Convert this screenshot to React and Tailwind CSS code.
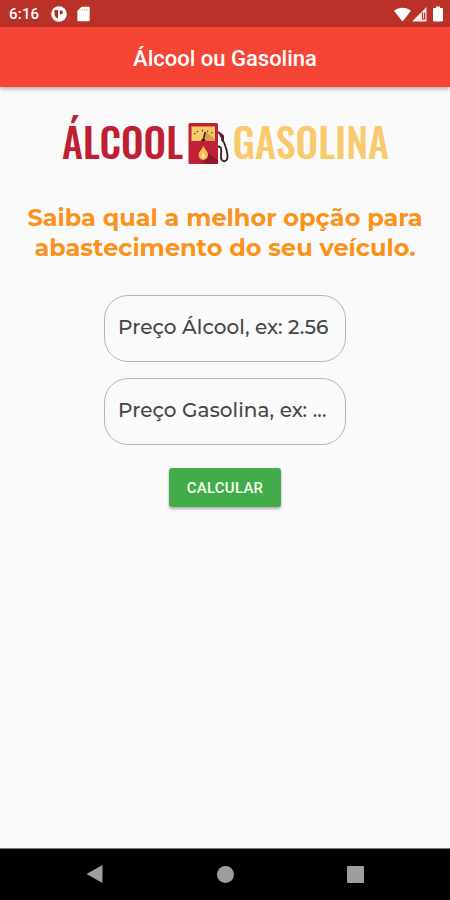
import React, { useState } from 'react';

function StatusBar() {
  return (
    <div className="h-[27px] bg-[#b93128] flex items-center justify-between pl-2 pr-[7px] pt-px text-white">
      <div className="flex items-center">
        <span className="w-[43px] pl-px pt-px text-[15px] leading-none font-medium tracking-[0.2px]">6:16</span>
        <svg className="w-4 h-4" viewBox="0 0 16 16">
          <circle cx="8" cy="8" r="7.800" fill="#fff" />
          <path d="M3.500 4h3.500v8.500A5 5 0 0 1 3.500 8zM8.800 4.500h1.200a1.900 1.900 0 0 1 0 3.800H8.800z" fill="#a92b26" />
        </svg>
        <svg className="w-[13px] h-4 ml-[10px]" viewBox="0 0 13 16">
          <path d="M4.500 .8h7a1.200 1.200 0 0 1 1.200 1.200v12a1.200 1.200 0 0 1-1.200 1.200h-10a1.200 1.200 0 0 1-1.200-1.200V5z" fill="#fff" />
          <path d="M4.500 3h1v2h-1zM7 3h1v2h-1zM9.500 3h1v2h-1z" fill="#e6a9a4" />
        </svg>
      </div>
      <div className="flex items-center">
        <svg className="w-[17px] h-[15px]" viewBox="0 0 17 15">
          <path d="M0 3.800C5-.4 12-.4 17 3.800L8.500 14.500z" fill="#fff" />
        </svg>
        <svg className="w-[15px] h-[15px] ml-px" viewBox="0 0 15 15">
          <path d="M0 14.500L14.500 0v14.500z" fill="#fff" fillOpacity="0.9" />
          <path d="M10.500 5.500v6.500h2.200v-6.500" fill="none" stroke="#b93128" strokeWidth="1.200" />
        </svg>
        <svg className="w-[10px] h-4 ml-[6px]" viewBox="0 0 10 16">
          <path d="M3 .5h4V2h2a1 1 0 0 1 1 1v11a1.500 1.500 0 0 1-1.500 1.500h-7A1.500 1.500 0 0 1 0 14V3a1 1 0 0 1 1-1h2z" fill="#fff" />
        </svg>
      </div>
    </div>
  );
}

function Logo() {
  return (
    <svg className="block w-[350px] h-[66px] mx-auto overflow-visible" viewBox="50 107 350 66" fontFamily="Oswald, 'Roboto Condensed', Roboto, sans-serif" fontWeight="500">
      <text x="62" y="158.500" fontSize="41" fill="#c01f32" textLength="121" lengthAdjust="spacingAndGlyphs">ÁLCOOL</text>
      <text x="232.500" y="158.500" fontSize="41" fill="#f9ca6b" textLength="156.500" lengthAdjust="spacingAndGlyphs">GASOLINA</text>
      <rect x="188.500" y="123" width="29.500" height="41" rx="1.500" fill="#bf2034" />
      <path d="M203 160l5-7 10 7v4h-12z" fill="#92182b" />
      <rect x="191.500" y="126.500" width="23.500" height="14.500" fill="#f8ca68" />
      <path d="M206 132l9 7v2h-11z" fill="#d99e4d" />
      <path d="M194 134l1.500-.8M197 131l1 1M202.500 129.500v2M208 130.500l-.7 1.500M212.500 133l-1.500-.5" stroke="#62382c" strokeWidth="1.100" />
      <path d="M203.200 140l2-8" stroke="#351b22" strokeWidth="1.600" />
      <path d="M201 141a2.300 2.300 0 0 1 4.600 0z" fill="#351b22" />
      <path d="M203.300 145.500c1.500 4 4.700 5.900 4.700 9.700a4.700 4.700 0 0 1-9.400 0c0-3.500 3.700-5.500 4.700-9.700z" fill="#f9bb54" />
      <path d="M203.300 152c.7 2 2 2.500 2 4.300a2 2 0 0 1-4 0c0-1.800 1.600-2.500 2-4.300z" fill="#ffe3a0" />
      <path d="M218 132l4 3v5l2 2.500c2 5 3.500 9 3.500 14 0 5-4 6-6 3-1.500-3 .5-7-.5-11-.5-2-1.500-2-3-2" fill="none" stroke="#351b22" strokeWidth="1.800" />
      <path d="M218 131.500l6 4v6.500l-3-3.500z" fill="#52202b" />
    </svg>
  );
}

function PriceInput({ placeholder, value, onChange }) {
  return (
    <input type="text" inputMode="decimal" value={value} onChange={e => onChange(e.target.value)}
      placeholder={placeholder}
      className="block w-[242px] h-[67px] pl-[13px] pr-2 pb-[3px] rounded-[24px] border border-[#b5b5b5] bg-transparent text-[20px] tracking-[0.08px] font-medium text-[#464646] placeholder:text-[#464646] font-['Montserrat',Inter,sans-serif] focus:outline-none focus:border-[#f44336]" />
  );
}

export default function App() {
  const [alcool, setAlcool] = useState('');
  const [gasolina, setGasolina] = useState('');

  return (
    <div className="w-full h-screen min-h-[900px] flex flex-col bg-[#fafafa] font-['Roboto',sans-serif]">
      <StatusBar />
      <header className="h-[60px] shrink-0 flex items-center justify-center bg-[#f64435] pt-[3px] shadow-[0_2px_4px_rgba(0,0,0,0.3)]">
        <h1 className="text-[22px] leading-none font-medium text-white">Álcool ou Gasolina</h1>
      </header>

      <main className="flex-1 flex flex-col items-center pt-5">
        <Logo />
        <h2 className="mt-[30px] text-center text-[24px] leading-[30px] font-bold text-[#fb9219] whitespace-nowrap font-['Montserrat',Inter,sans-serif]">
          <span className="block">Saiba qual a melhor opção para</span>
          <span className="block">abastecimento do seu veículo.</span>
        </h2>
        <form onSubmit={e => e.preventDefault()} className="mt-8 flex flex-col items-center">
          <div className="flex flex-col gap-4">
            <PriceInput placeholder="Preço Álcool, ex: 2.56" value={alcool} onChange={setAlcool} />
            <PriceInput placeholder="Preço Gasolina, ex: ..." value={gasolina} onChange={setGasolina} />
          </div>
          <button type="submit"
            className="mt-[23px] w-[112px] h-[39px] pt-px rounded-[3px] bg-[#43ab49] text-[15px] tracking-[0.25px] font-medium text-[#f5fff5] shadow-[0_2px_3px_rgba(0,0,0,0.3)]">
            CALCULAR
          </button>
        </form>
      </main>

      <nav className="h-[52px] shrink-0 bg-black border-t border-[#777] flex items-center justify-between px-[86px] pb-px">
        <svg className="w-[17px] h-[18px]" viewBox="0 0 17 18"><path d="M16.500 0v18L0.500 9z" fill="#9e9e9e" /></svg>
        <div className="w-[17px] h-[17px] rounded-full bg-[#9e9e9e]" />
        <div className="w-[17px] h-[17px] rounded-[1px] bg-[#9e9e9e]" />
      </nav>
    </div>
  );
}
